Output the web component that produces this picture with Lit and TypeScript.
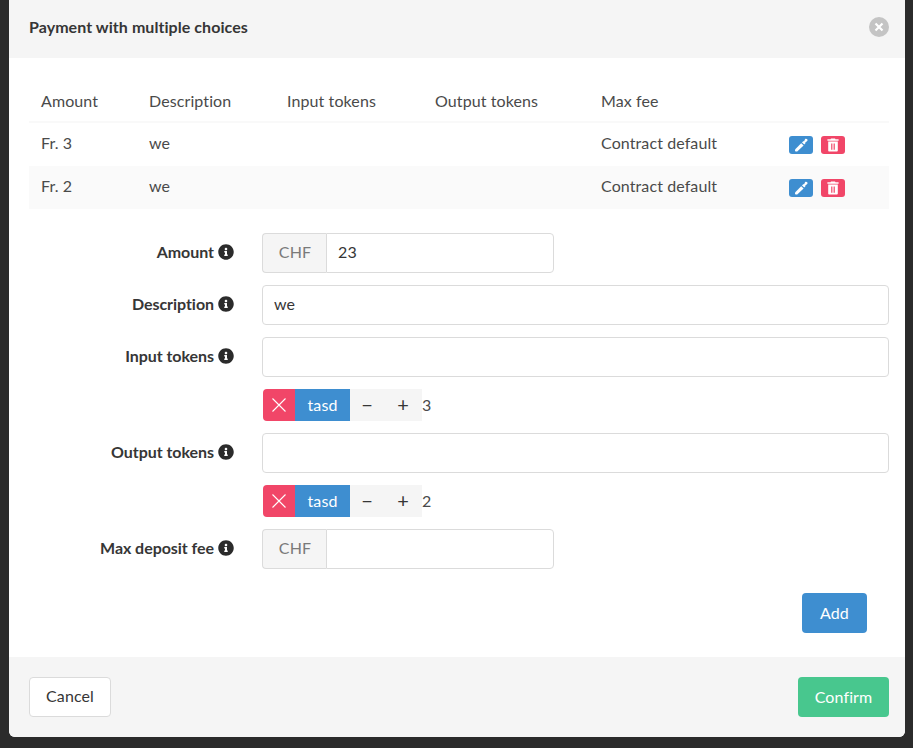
import { LitElement, html, css } from "lit";
import { customElement } from "lit/decorators.js";

const info = html`<svg class="info" viewBox="0 0 512 512"><path fill="#2b2b2b" d="M256 8C119.043 8 8 119.083 8 256c0 136.997 111.043 248 248 248s248-111.003 248-248C504 119.083 392.957 8 256 8zm0 110c23.196 0 42 18.804 42 42s-18.804 42-42 42-42-18.804-42-42 18.804-42 42-42zm56 254c0 6.627-5.373 12-12 12h-88c-6.627 0-12-5.373-12-12v-24c0-6.627 5.373-12 12-12h12v-64h-12c-6.627 0-12-5.373-12-12v-24c0-6.627 5.373-12 12-12h64c6.627 0 12 5.373 12 12v100h12c6.627 0 12 5.373 12 12v24z"/></svg>`;

const pen = html`<svg class="ic" viewBox="0 0 14 14"><path fill="#fff" d="M1 11.6 L7.2 5.2 L9.6 7.4 L3.2 13.4 L1.6 13.4 L1 12.8 Z"/><path fill="#fff" d="M8 4.4 L9.4 3 L10 3.5 L11 1.2 C11.6 .6 12.7 .7 13.2 1.3 C13.7 1.9 13.7 2.8 13 3.3 L11.2 4.4 L11.6 5 L10.3 6.6 Z"/></svg>`;
const trash = html`<svg class="ic" viewBox="0 0 14 14"><path fill="#fff" fill-rule="evenodd" d="M5 .4 H9 L9.5 1.2 H12.6 V2.8 H1.4 V1.2 H4.5 Z M2.2 3.6 H11.8 V12.4 C11.8 13.1 11.3 13.6 10.6 13.6 H3.4 C2.7 13.6 2.2 13.1 2.2 12.4 Z M5.2 5.4 V11.8 H6.4 V5.4 Z M7.6 5.4 V11.8 H8.8 V5.4 Z"/></svg>`;

interface Row { amount: string; desc: string }
const rows: Row[] = [
  { amount: "Fr. 3", desc: "we" },
  { amount: "Fr. 2", desc: "we" },
];

@customElement("app-root")
export class AppRoot extends LitElement {
  static styles = css`
    :host { display: block; width: 913px; height: 748px; overflow: hidden; background: #2b2b2b;
      font-family: "Lato", sans-serif; font-size: 16px; letter-spacing: 0.1px; color: #363636; }
    * { box-sizing: border-box; }
    .card { margin: 0 8px 0 9px; width: 896px; height: 737px; background: #fff; border-radius: 0 0 6px 6px;
      overflow: hidden; display: flex; flex-direction: column; }
    .head { height: 58px; flex: none; background: #f5f5f5; display: flex; align-items: center;
      justify-content: space-between; padding: 0 16px 4px 20px; }
    .title { font-size: 16px; font-weight: 700; color: #363636; letter-spacing: 0.06px; padding-bottom: 2px; }
    .close { width: 20px; height: 20px; border-radius: 50%; background: #c4c4c4; display: flex; align-items: center; justify-content: center; }
    .close svg { width: 10px; height: 10px; }
    .body { flex: 1; padding: 22px 16px 0 20px; display: flex; flex-direction: column; }
    table { width: 860px; border-collapse: separate; border-spacing: 0; table-layout: fixed; }
    th, td { text-align: left; font-weight: 400; height: 43px; color: #4a4a4a; }
    th { padding: 0 12px; border-bottom: 2px solid #f9f9f9; }
    td { padding: 0 12px 4px; }
    tbody tr:nth-child(2) td { background: #fafafa; }
    .actions { display: flex; gap: 8px; padding-top: 4px; }
    .mini { width: 24px; height: 18px; border-radius: 3px; display: flex; align-items: center; justify-content: center; }
    .blue { background: #3e8ed0; }
    .red { background: #f14668; }
    .ic { width: 14px; height: 14px; }
    form { margin-top: 24px; display: flex; flex-direction: column; gap: 12px; }
    .field { display: grid; grid-template-columns: 233px 1fr; align-items: center; }
    .label { display: flex; justify-content: flex-end; align-items: center; gap: 4px; padding-right: 28px;
      font-weight: 700; color: #363636; letter-spacing: -0.05px; }
    .label span { padding-bottom: 3px; }
    .info { width: 16px; height: 16px; margin-top: -3px; flex: none; }
    .input { height: 40px; border: 1px solid #dbdbdb; border-radius: 4px; padding: 0 11px 4px; font: inherit; letter-spacing: inherit;
      color: #363636; width: 100%; background: #fff; display: block; outline: none; }
    .group { display: flex; width: 292px; }
    .addon { width: 64px; height: 40px; flex: none; background: #f5f5f5; border: 1px solid #dbdbdb; border-right: 0;
      border-radius: 4px 0 0 4px; color: #7a7a7a; display: flex; align-items: center; justify-content: center; padding: 0 0 4px 1px; }
    .group .input { border-radius: 0 4px 4px 0; }
    .tokens { grid-column: 2; display: flex; align-items: center; height: 32px; margin-left: 1px; color: #4a4a4a; }
    .tokens > span { padding-bottom: 2px; }
    .x { width: 32px; height: 32px; background: #f14668; border-radius: 4px 0 0 4px; display: flex; align-items: center; justify-content: center; }
    .x svg { width: 14px; height: 14px; }
    .tname { width: 55px; height: 32px; background: #3e8ed0; color: #fff; display: flex; align-items: center; justify-content: center; padding-bottom: 2px; }
    .step { width: 72px; height: 32px; background: #f5f5f5; display: flex; color: #363636; }
    .step span { width: 36px; display: flex; align-items: center; justify-content: center; font-size: 20px; padding: 0 2px 2px 0; }
    .add-row { display: flex; justify-content: flex-end; padding: 24px 22px 0 0; }
    .btn { height: 40px; border-radius: 4px; display: flex; align-items: center; justify-content: center; padding-bottom: 2px; }
    .add { width: 65px; background: #3e8ed0; color: #fff; }
    .foot { height: 80px; flex: none; background: #f5f5f5; display: flex; align-items: center; justify-content: space-between; padding: 0 16px 0 20px; }
    .cancel { width: 82px; background: #fff; border: 1px solid #dbdbdb; color: #363636; padding-bottom: 4px; }
    .confirm { width: 91px; background: #48c78e; color: #fff; }
  `;

  private field(label: string, control: unknown) {
    return html`<div class="field"><div class="label"><span>${label}</span>${info}</div>${control}</div>`;
  }

  private tokens(n: string) {
    return html`<div class="field"><div class="tokens">
      <div class="x"><svg viewBox="0 0 14 14"><path d="M.5 .5 L13.5 13.5 M13.5 .5 L.5 13.5" stroke="#fff" stroke-width="1.1" fill="none"/></svg></div>
      <div class="tname">tasd</div>
      <div class="step"><span>−</span><span>+</span></div>
      <span>${n}</span>
    </div></div>`;
  }

  render() {
    return html`<div class="card">
      <div class="head">
        <div class="title">Payment with multiple choices</div>
        <div class="close"><svg viewBox="0 0 10 10"><path d="M1.5 1.5 L8.5 8.5 M8.5 1.5 L1.5 8.5" stroke="#fff" stroke-width="2.2" fill="none"/></svg></div>
      </div>
      <div class="body">
        <table>
          <colgroup><col style="width:108px"/><col style="width:138px"/><col style="width:148px"/><col style="width:166px"/><col style="width:188px"/><col style="width:112px"/></colgroup>
          <thead><tr><th>Amount</th><th>Description</th><th>Input tokens</th><th>Output tokens</th><th>Max fee</th><th></th></tr></thead>
          <tbody>
            ${rows.map((r) => html`<tr><td>${r.amount}</td><td>${r.desc}</td><td></td><td></td><td>Contract default</td>
              <td><div class="actions"><div class="mini blue">${pen}</div><div class="mini red">${trash}</div></div></td></tr>`)}
          </tbody>
        </table>
        <form>
          ${this.field("Amount", html`<div class="group"><div class="addon">CHF</div><input class="input" .value=${"23"} /></div>`)}
          ${this.field("Description", html`<input class="input" .value=${"we"} />`)}
          ${this.field("Input tokens", html`<input class="input" />`)}
          ${this.tokens("3")}
          ${this.field("Output tokens", html`<input class="input" />`)}
          ${this.tokens("2")}
          ${this.field("Max deposit fee", html`<div class="group"><div class="addon">CHF</div><input class="input" /></div>`)}
        </form>
        <div class="add-row"><div class="btn add">Add</div></div>
      </div>
      <div class="foot"><div class="btn cancel">Cancel</div><div class="btn confirm">Confirm</div></div>
    </div>`;
  }
}
